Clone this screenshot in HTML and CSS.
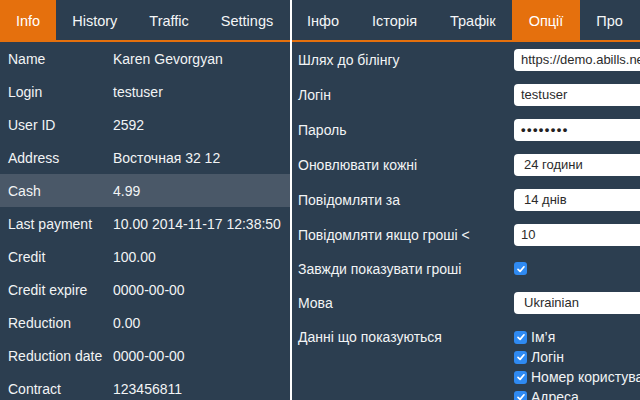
FILE: index.html
```html
<!DOCTYPE html>
<html lang="uk">
<head>
<meta charset="utf-8">
<title>ABillS</title>
<link rel="stylesheet" href="styles.css">
</head>
<body>
<div class="page">
  <section class="panel left">
    <nav class="tabs">
      <span class="tab active">Info</span>
      <span class="tab">History</span>
      <span class="tab">Traffic</span>
      <span class="tab">Settings</span>
    </nav>
    <div class="info">
      <div class="row"><span class="k">Name</span><span class="v">Karen Gevorgyan</span></div>
      <div class="row"><span class="k">Login</span><span class="v">testuser</span></div>
      <div class="row"><span class="k">User ID</span><span class="v">2592</span></div>
      <div class="row"><span class="k">Address</span><span class="v">Восточная 32 12</span></div>
      <div class="row hl"><span class="k">Cash</span><span class="v">4.99</span></div>
      <div class="row"><span class="k">Last payment</span><span class="v">10.00 2014-11-17 12:38:50</span></div>
      <div class="row"><span class="k">Credit</span><span class="v">100.00</span></div>
      <div class="row"><span class="k">Credit expire</span><span class="v">0000-00-00</span></div>
      <div class="row"><span class="k">Reduction</span><span class="v">0.00</span></div>
      <div class="row"><span class="k">Reduction date</span><span class="v">0000-00-00</span></div>
      <div class="row"><span class="k">Contract</span><span class="v">123456811</span></div>
    </div>
  </section>
  <section class="panel right">
    <nav class="tabs">
      <span class="tab">Інфо</span>
      <span class="tab">Історія</span>
      <span class="tab">Трафік</span>
      <span class="tab active">Опції</span>
      <span class="tab">Про</span>
    </nav>
    <div class="form">
      <div class="frow"><span class="lbl">Шлях до білінгу</span><span class="field">https://demo.abills.net.ua:9443/</span></div>
      <div class="frow"><span class="lbl">Логін</span><span class="field">testuser</span></div>
      <div class="frow"><span class="lbl">Пароль</span><span class="field dots">••••••••</span></div>
      <div class="frow"><span class="lbl">Оновлювати кожні</span><span class="field sel">24 години</span></div>
      <div class="frow"><span class="lbl">Повідомляти за</span><span class="field sel">14 днів</span></div>
      <div class="frow"><span class="lbl">Повідомляти якщо гроші &lt;</span><span class="field">10</span></div>
      <div class="frow short"><span class="lbl">Завжди показувати гроші</span><span class="cb"><svg viewBox="0 0 12 12" width="12" height="12"><path d="M3 6.3 L5.1 8.4 L9 3.8" fill="none" stroke="#fff" stroke-width="1.7" stroke-linecap="round" stroke-linejoin="round"/></svg></span></div>
      <div class="frow"><span class="lbl">Мова</span><span class="field sel">Ukrainian</span></div>
      <div class="frow list"><span class="lbl">Данні що показуються</span>
        <div class="checks">
          <div class="chk"><span class="cb"><svg viewBox="0 0 12 12" width="12" height="12"><path d="M3 6.3 L5.1 8.4 L9 3.8" fill="none" stroke="#fff" stroke-width="1.7" stroke-linecap="round" stroke-linejoin="round"/></svg></span>Ім’я</div>
          <div class="chk"><span class="cb"><svg viewBox="0 0 12 12" width="12" height="12"><path d="M3 6.3 L5.1 8.4 L9 3.8" fill="none" stroke="#fff" stroke-width="1.7" stroke-linecap="round" stroke-linejoin="round"/></svg></span>Логін</div>
          <div class="chk"><span class="cb"><svg viewBox="0 0 12 12" width="12" height="12"><path d="M3 6.3 L5.1 8.4 L9 3.8" fill="none" stroke="#fff" stroke-width="1.7" stroke-linecap="round" stroke-linejoin="round"/></svg></span>Номер користувача</div>
          <div class="chk"><span class="cb"><svg viewBox="0 0 12 12" width="12" height="12"><path d="M3 6.3 L5.1 8.4 L9 3.8" fill="none" stroke="#fff" stroke-width="1.7" stroke-linecap="round" stroke-linejoin="round"/></svg></span>Адреса</div>
        </div>
      </div>
    </div>
  </section>
</div>
</body>
</html>
```

FILE: styles.css
```css
* { box-sizing: border-box; }
html, body { margin: 0; padding: 0; }
body {
  background: #ffffff;
  font-family: "Liberation Sans", Arial, sans-serif;
  color: #f2f4f5;
}
.page {
  display: flex;
  gap: 2px;
  width: 640px;
  height: 400px;
  overflow: hidden;
}
.panel {
  background: #2c3e50;
  height: 400px;
  overflow: hidden;
}
.left { width: 290px; flex: none; }
.right { flex: 1; min-width: 0; }

.tabs {
  display: flex;
  height: 42px;
  border-bottom: 2px solid #e5700d;
  white-space: nowrap;
}
.tab {
  display: flex;
  align-items: center;
  padding: 2px 16px 0;
  font-size: 14.5px;
  color: #f4f6f7;
  height: 40px;
}
.right .tab { padding: 2px 16.5px 0; }
.right .tab:first-child { padding-left: 15px; }
.tab.active { background: #e5700d; color: #fff; }

.row {
  display: flex;
  align-items: center;
  height: 33px;
  font-size: 14px;
  white-space: nowrap;
}
.row .k { width: 113px; padding-left: 8px; flex: none; }
.row.hl { background: #4a5868; }

.form { padding-left: 6px; font-size: 14px; }
.frow {
  display: flex;
  align-items: center;
  height: 35px;
  white-space: nowrap;
}
.frow.short { height: 33px; }
.frow .lbl { width: 216px; flex: none; }
.field {
  display: block;
  width: 200px;
  height: 22px;
  line-height: 22px;
  background: #fff;
  border-radius: 4px;
  color: #2b2b2b;
  font-size: 13px;
  padding-left: 7px;
  flex: none;
}
.field.sel { padding-left: 10px; }
.field.dots { font-size: 13px; letter-spacing: 1.4px; font-weight: bold; color: #222; }
.cb {
  display: inline-flex;
  align-items: center;
  justify-content: center;
  width: 13px;
  height: 13px;
  border-radius: 3px;
  background: #2f8af2;
  flex: none;
}
.frow.list {
  height: auto;
  align-items: flex-start;
  padding-top: 7px;
}
.frow.list .lbl { line-height: 20px; }
.checks { display: flex; flex-direction: column; }
.chk {
  display: flex;
  align-items: center;
  gap: 4px;
  height: 20px;
  font-size: 14px;
}
```
